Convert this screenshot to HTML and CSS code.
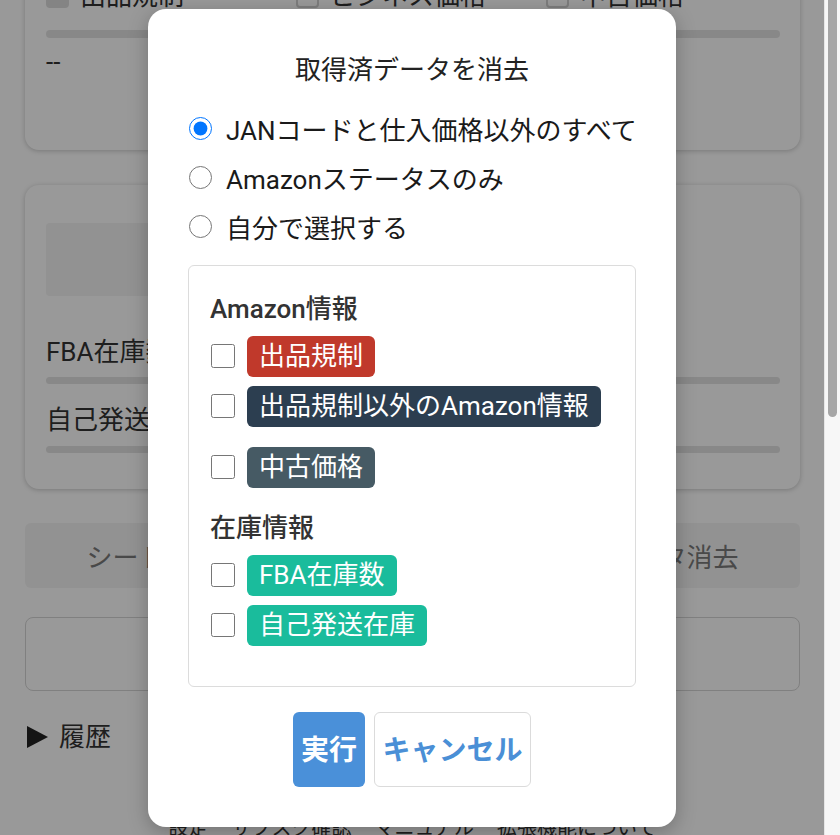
FILE: index.html
```html
<!DOCTYPE html>
<html lang="ja">
<head>
<meta charset="utf-8">
<title>取得済データを消去</title>
<link rel="stylesheet" href="styles.css">
</head>
<body>
<div class="screen">
  <div class="viewport">
    <main class="page">
      <section class="card card-top">
        <div class="check-row">
          <div class="check-item"><span class="fake-cb is-checked"></span><span>出品規制</span></div>
          <div class="check-item"><span class="fake-cb"></span><span>ビジネス価格</span></div>
          <div class="check-item"><span class="fake-cb"></span><span>中古価格</span></div>
        </div>
        <div class="bar"></div>
        <div class="value value-dash">--</div>
      </section>

      <section class="card card-stock">
        <div class="skeleton"></div>
        <div class="value value-fba">FBA在庫数</div>
        <div class="bar bar-thin"></div>
        <div class="value value-self">自己発送在庫</div>
        <div class="bar bar-thin bar-last"></div>
      </section>

      <div class="actions">
        <button class="action" type="button">シート出力</button>
        <button class="action" type="button">CSV出力</button>
        <button class="action" type="button">データ消去</button>
      </div>

      <div class="input-box"></div>

      <div class="history"><span class="triangle"></span><span>履歴</span></div>

      <footer class="footer">
        <span>設定</span>
        <span>サブスク確認</span>
        <span>マニュアル</span>
        <span>拡張機能について</span>
      </footer>
    </main>

    <div class="overlay">
      <div class="modal">
        <h2 class="modal-title">取得済データを消去</h2>
        <div class="radios">
          <label class="radio-row"><input type="radio" name="mode" checked><span>JANコードと仕入価格以外のすべて</span></label>
          <label class="radio-row"><input type="radio" name="mode"><span>Amazonステータスのみ</span></label>
          <label class="radio-row"><input type="radio" name="mode"><span>自分で選択する</span></label>
        </div>

        <div class="select-box">
          <div class="group">
            <div class="group-title">Amazon情報</div>
            <label class="opt"><input type="checkbox"><span class="tag tag-red">出品規制</span></label>
            <label class="opt"><input type="checkbox"><span class="tag tag-navy">出品規制以外のAmazon情報</span></label>
            <label class="opt opt-spaced"><input type="checkbox"><span class="tag tag-slate">中古価格</span></label>
          </div>
          <div class="group">
            <div class="group-title">在庫情報</div>
            <label class="opt"><input type="checkbox"><span class="tag tag-teal">FBA在庫数</span></label>
            <label class="opt"><input type="checkbox"><span class="tag tag-teal">自己発送在庫</span></label>
          </div>
        </div>

        <div class="modal-buttons">
          <button class="btn btn-primary" type="button">実行</button>
          <button class="btn btn-outline" type="button">キャンセル</button>
        </div>
      </div>
    </div>
  </div>
  <div class="scrollbar"><div class="thumb"></div></div>
</div>
</body>
</html>
```

FILE: styles.css
```css
* { box-sizing: border-box; }

html, body {
  margin: 0;
  padding: 0;
}

body {
  font-family: Roboto, "Noto Sans CJK JP", sans-serif;
  font-size: 26px;
  color: #333;
  background: #fff;
  overflow: hidden;
}

.screen {
  display: flex;
  width: 840px;
  height: 835px;
}

.viewport {
  position: relative;
  flex: none;
  width: 824px;
  height: 835px;
  overflow: hidden;
}

/* page behind the dialog (scrolled) */
.page {
  margin-top: -42px;
  padding: 0 24px 0 25px;
}

.card {
  background: #fff;
  border-radius: 14px;
  box-shadow: 0 1px 5px rgba(0, 0, 0, 0.22);
}

.card-top {
  padding: 20px 20px 70px 21px;
}

.check-row {
  display: flex;
  height: 36px;
  line-height: 36px;
}

.check-item {
  display: flex;
  align-items: center;
  gap: 11px;
  width: 250px;
  flex: none;
  white-space: nowrap;
}

.fake-cb {
  width: 23px;
  height: 23px;
  border-radius: 4px;
  border: 2px solid #d0d0d0;
  background: #fff;
  flex: none;
}

.fake-cb.is-checked {
  border-color: #dcdcdc;
  background: #dcdcdc;
}

.bar {
  height: 8px;
  margin-top: 16px;
  border-radius: 4px;
  background: #e3e3e3;
}

.value {
  line-height: 36px;
  height: 36px;
  color: #333;
  white-space: nowrap;
}

.value-dash { margin-top: 6px; }

.card-stock {
  margin-top: 35px;
  padding: 38px 20px 36px 21px;
}

.skeleton {
  width: 50%;
  height: 73px;
  background: #f3f3f3;
  border-radius: 4px;
}

.value-fba { margin-top: 38px; }
.value-self { margin-top: 18px; }

.bar-thin {
  height: 7px;
  margin-top: 7px;
}

.bar-last { margin-top: 8px; }

.actions {
  display: flex;
  gap: 8px;
  margin-top: 34px;
  height: 65px;
}

.action {
  flex: 1;
  border: 0;
  border-radius: 6px;
  background: #f4f4f4;
  color: #7a7a7a;
  font-family: inherit;
  font-size: 26px;
  white-space: nowrap;
}

.input-box {
  margin-top: 29px;
  height: 74px;
  border: 1px solid #d6d6d6;
  border-radius: 8px;
}

.history {
  display: flex;
  align-items: center;
  gap: 11px;
  margin-top: 28px;
  height: 36px;
  line-height: 36px;
  color: #333;
}

.triangle {
  width: 0;
  height: 0;
  margin-left: 2px;
  border-left: 21px solid #222;
  border-top: 11.5px solid transparent;
  border-bottom: 11.5px solid transparent;
}

.footer {
  display: flex;
  justify-content: center;
  gap: 23px;
  margin-top: 58px;
  font-size: 20px;
  line-height: 30px;
  color: #333;
  white-space: nowrap;
}

/* dim layer + dialog */
.overlay {
  position: absolute;
  inset: 0;
  background: rgba(0, 0, 0, 0.4);
  display: flex;
  align-items: center;
  justify-content: center;
}

.modal {
  width: 528px;
  background: #fff;
  border-radius: 18px;
  padding: 42px 40px 40px;
  box-shadow: 0 5px 20px rgba(0, 0, 0, 0.25);
}

.modal-title {
  margin: 0;
  font-size: 26px;
  font-weight: 400;
  line-height: 39px;
  text-align: center;
  color: #222;
}

.radios {
  margin-top: 14px;
}

.radio-row {
  display: flex;
  align-items: center;
  gap: 14px;
  height: 49px;
  color: #1a1a1a;
  white-space: nowrap;
}

.radio-row input {
  width: 23px;
  height: 23px;
  margin: 0 0 0 1px;
  flex: none;
}

.select-box {
  margin-top: 14px;
  border: 1px solid #dcdcdc;
  border-radius: 6px;
  padding: 25px 21px 40px;
}

.group + .group {
  margin-top: 22px;
}

.group-title {
  height: 36px;
  line-height: 36px;
  margin-bottom: 9px;
  font-weight: 500;
  color: #333;
}

.opt {
  display: flex;
  align-items: center;
  gap: 12px;
  margin-top: 9px;
}

.group-title + .opt { margin-top: 0; }

.opt.opt-spaced { margin-top: 20px; }

.opt input {
  width: 24px;
  height: 24px;
  margin: 0 0 0 1px;
  flex: none;
}

.tag {
  display: inline-block;
  padding: 5px 12px;
  line-height: 31px;
  border-radius: 6px;
  color: #fff;
  font-size: 26px;
  white-space: nowrap;
}

.tag-red { background: #c0392b; }
.tag-navy { background: #2c3e50; }
.tag-slate { background: #465a64; }
.tag-teal { background: #1abc9c; }

.modal-buttons {
  display: flex;
  justify-content: center;
  gap: 9px;
  margin-top: 25px;
}

.btn {
  height: 75px;
  padding-top: 4px;
  font-family: inherit;
  font-size: 28px;
  font-weight: 700;
  line-height: 1;
  border-radius: 6px;
  white-space: nowrap;
}

.btn-primary {
  background: #4a90d9;
  color: #fff;
  border: 0;
  padding-left: 8px;
  padding-right: 8px;
}

.btn-outline {
  background: #fff;
  color: #4a8fd6;
  border: 1px solid #dbdbdb;
  padding-left: 7.5px;
  padding-right: 7.5px;
}

/* fake scrollbar */
.scrollbar {
  flex: none;
  width: 16px;
  height: 835px;
  background: #f7f7f7;
  border-left: 1px solid #e6e6e6;
  padding: 0 3px;
}

.thumb {
  width: 9px;
  height: 417px;
  border-radius: 0 0 5px 5px;
  background: #a6a6a6;
}
```
